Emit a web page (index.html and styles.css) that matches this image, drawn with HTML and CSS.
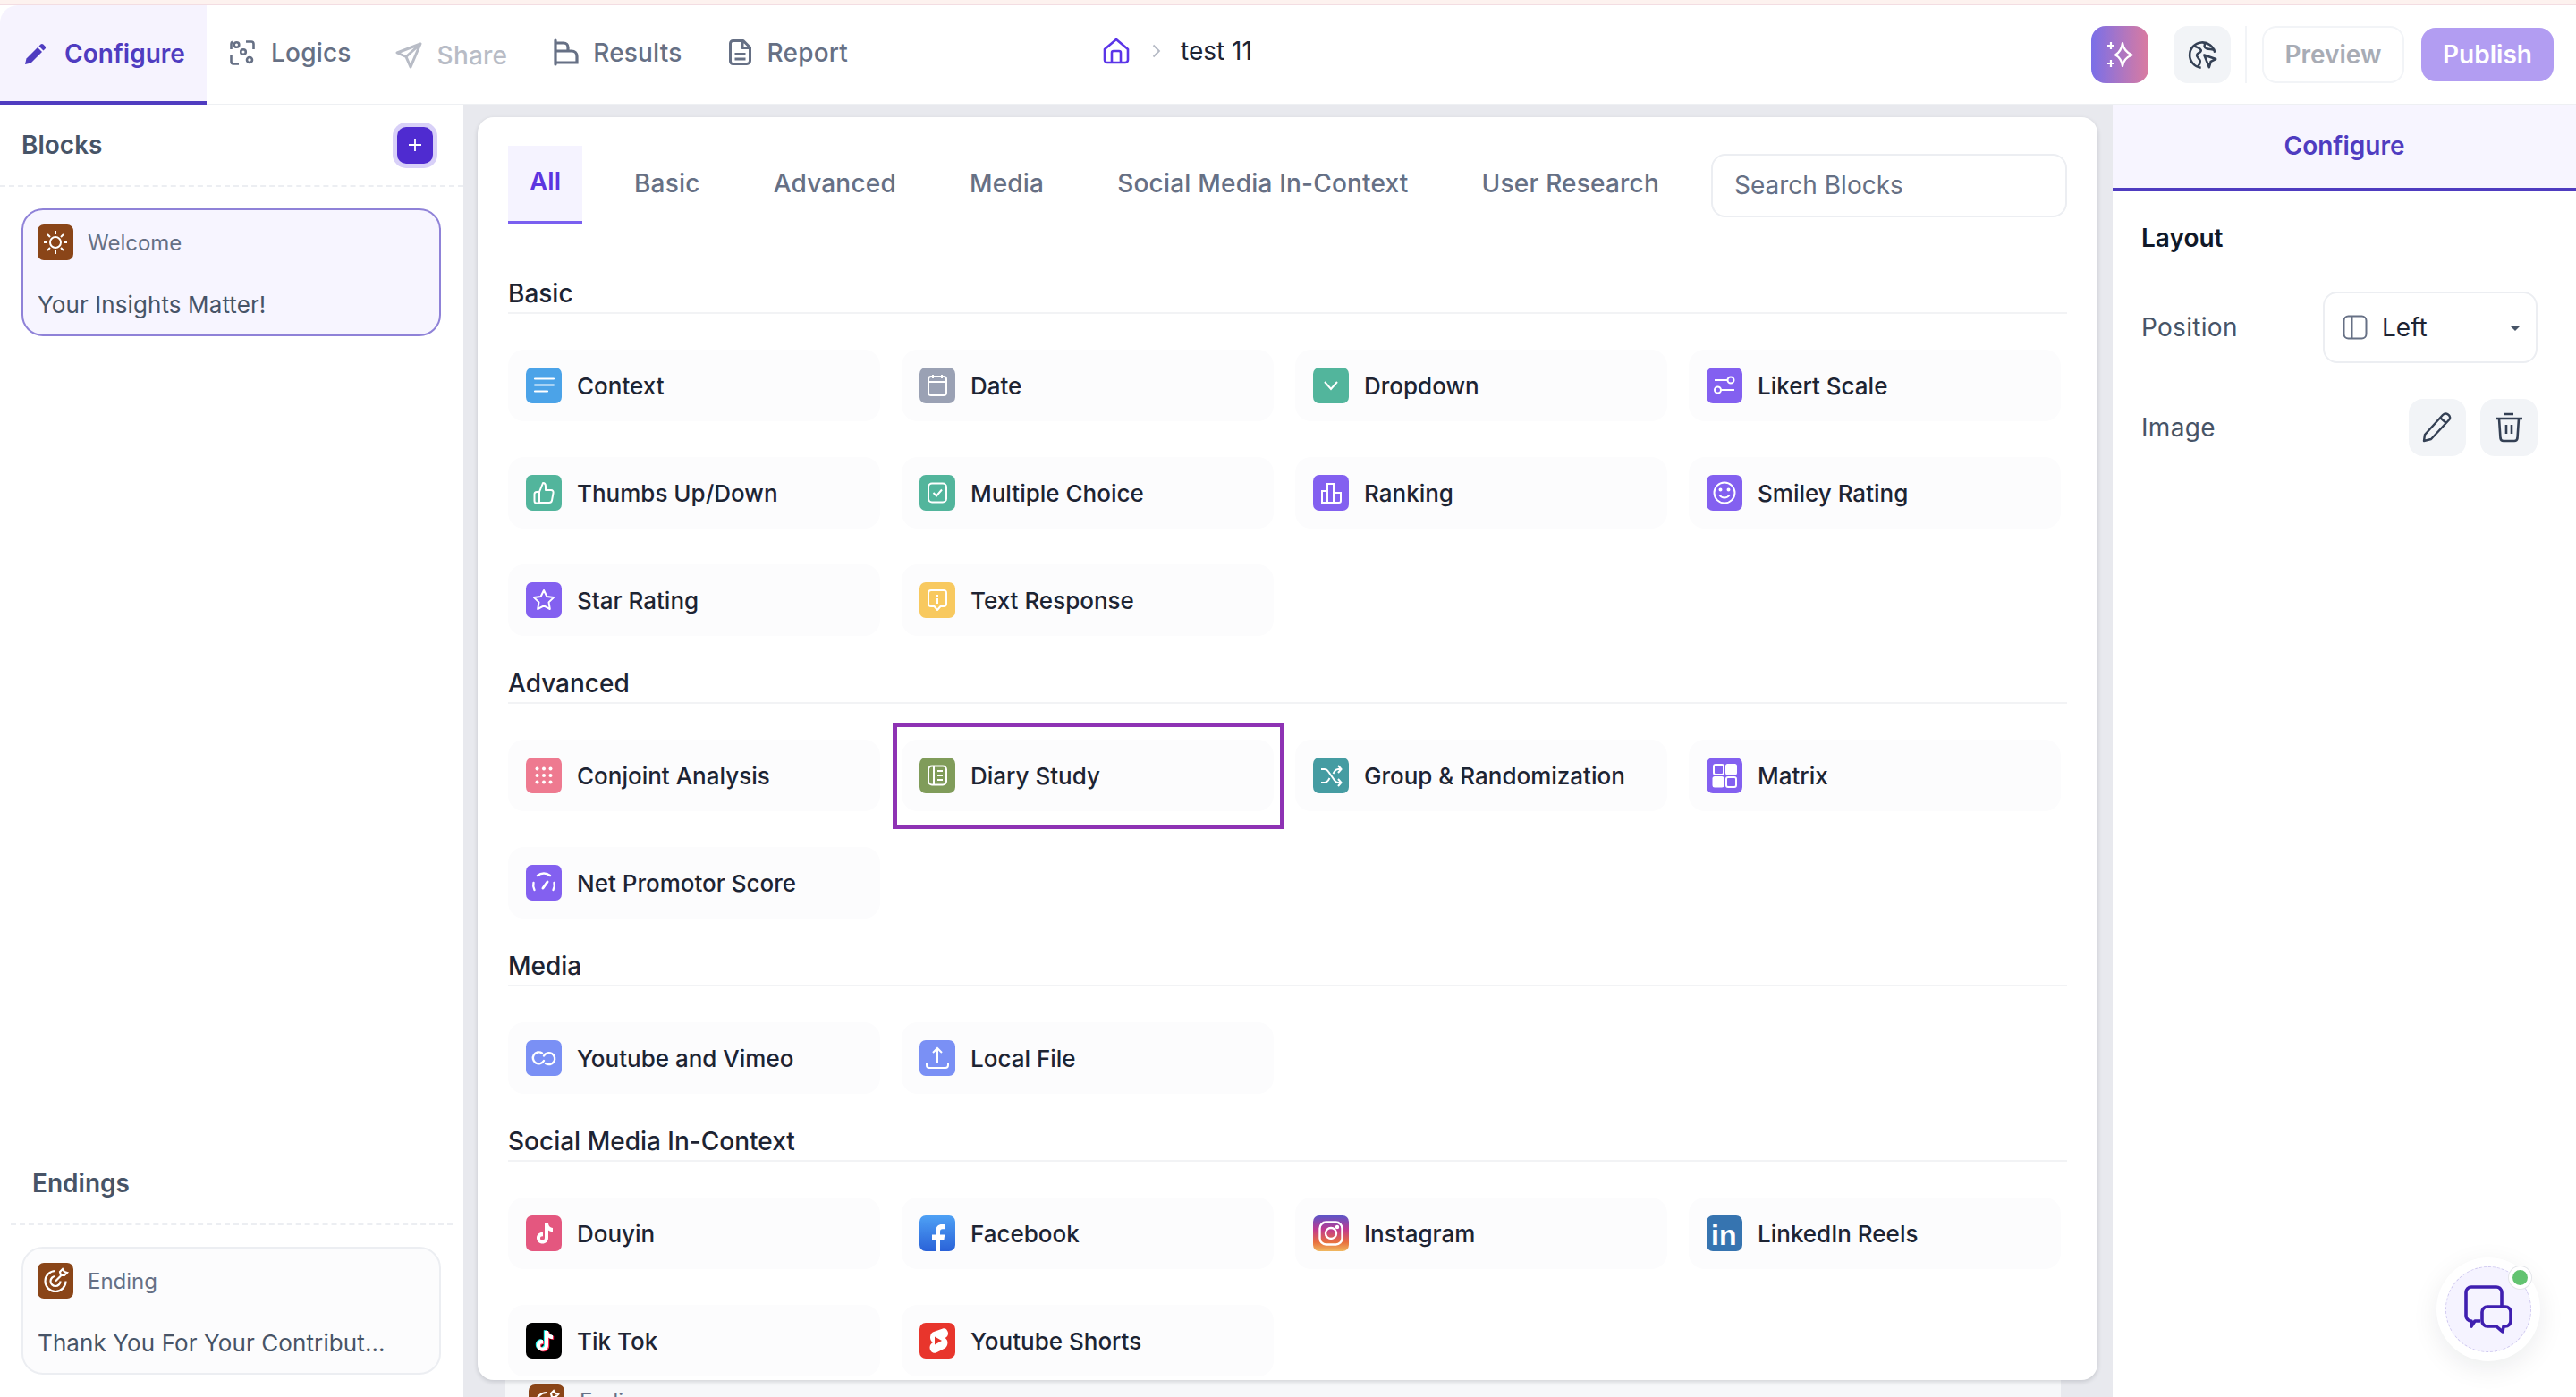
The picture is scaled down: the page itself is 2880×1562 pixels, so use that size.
FILE: index.html
```html
<!DOCTYPE html>
<html lang="en">
<head>
    <meta charset="UTF-8">
    <title>Configure - test 11</title>
    <link rel="stylesheet" href="styles.css">
</head>
<body>

<div class="top-line"></div>

<!-- Top bar -->
<header class="topbar">
    <nav class="nav">
        <a class="nav-item active">
            <svg width="24" height="24" viewBox="0 0 24 24" fill="#4f3cc0"><path d="M0 24l1.500-6.500L14 5l5 5L6.500 22.500z"/><path d="M15.500 3.500l2-2c.8-.8 2-.8 2.800 0l2.200 2.200c.8.800.8 2 0 2.800l-2 2z"/></svg>
            Configure
        </a>
        <a class="nav-item logics">
            <svg width="28" height="28" viewBox="0 0 28 28" fill="none" stroke="#667085" stroke-width="2.600"><path d="M18 1.500h6a2.500 2.500 0 0 1 2.500 2.500v6M1.500 17v7A2.500 2.500 0 0 0 4 26.500h6M1.500 10V4A2.500 2.500 0 0 1 3 1.700"/><circle cx="7.500" cy="5" r="2.800"/><circle cx="15" cy="13" r="2.800"/><circle cx="22" cy="22" r="3"/></svg>
            Logics
        </a>
        <a class="nav-item share">
            <svg width="30" height="30" viewBox="0 0 30 30" fill="none" stroke="#b8bcc6" stroke-width="3" stroke-linejoin="round"><path d="M28 2L2 12l10 4.500L17 28zM12 16.500L28 2"/></svg>
            Share
        </a>
        <a class="nav-item results">
            <svg width="28" height="31" viewBox="0 0 28 31" fill="none" stroke="#667085" stroke-width="3.200" stroke-linecap="round"><path d="M2 2v27M2 5h9c3 0 5 2 5 5v4M2 14h18c3.500 0 6 2.500 6 6v7H2"/></svg>
            Results
        </a>
        <a class="nav-item report">
            <svg width="25" height="29" viewBox="0 0 25 29" fill="none" stroke="#667085" stroke-width="3" stroke-linejoin="round"><path d="M4.500 1.500H16l7.500 7.500v15a3.500 3.500 0 0 1-3.500 3.500H4.500A3 3 0 0 1 1.500 24.500v-20a3 3 0 0 1 3-3zM15 2v7.500h8M6.500 16.500h12M6.500 22h12"/></svg>
            Report
        </a>
    </nav>

    <div class="crumbs">
        <svg width="30" height="30" viewBox="0 0 30 30" fill="none" stroke="#5b35e8" stroke-width="2.600" stroke-linejoin="round"><path d="M2 13L15 2l13 11v12a3 3 0 0 1-3 3H5a3 3 0 0 1-3-3z"/><path d="M10 28V17a2 2 0 0 1 2-2h6a2 2 0 0 1 2 2v11"/></svg>
        <svg class="crumb-sep" width="10" height="16" viewBox="0 0 10 16" fill="none" stroke="#b4b9c4" stroke-width="1.800"><path d="M1.500 1.500L8 8l-6.500 6.500"/></svg>
        <span class="crumb-name">test 11</span>
    </div>

    <div class="actions">
        <button class="icon-btn ai">
            <svg width="30" height="30" viewBox="0 0 30 30" fill="none" stroke="#fff" stroke-width="2.200" stroke-linejoin="round"><path d="M18 2c1 7 4 10.500 10.500 13.500C22 18 19 21.500 18 28c-1-6.500-3-10-8-12.500 5-3 7-6.500 8-13.500z"/><path d="M5 1v8M1 5h8M5 21v8M1 25h8"/></svg>
        </button>
        <button class="icon-btn globe">
            <svg width="33" height="33" viewBox="0 0 36 36" fill="none" stroke="#344054" stroke-width="2.800" stroke-linejoin="round"><path d="M33 15A15.500 15.500 0 1 0 16 33.500"/><path d="M8 7c3 2 7 2 8 5s-4 3-5 6 4 4 4 8-2 5-3 6M22 3c-3 3-2 6 1 7s7 1 10 2"/><path d="M20 18l14 5-6 3-2 7z"/></svg>
        </button>
        <div class="divider"></div>
        <button class="preview">Preview</button>
        <button class="publish">Publish</button>
    </div>
</header>

<div class="layout">
    <!-- Left sidebar -->
    <aside class="sidebar">
        <div class="blocks-head">
            <span class="blocks-title">Blocks</span>
            <button class="add-btn">
                <svg width="16" height="16" viewBox="0 0 16 16" stroke="#fff" stroke-width="1.800"><path d="M8 1v14M1 8h14"/></svg>
            </button>
        </div>
        <div class="side-card selected">
            <div class="side-card-head">
                <span class="ico brown">
                    <svg width="40" height="40" viewBox="0 0 40 40" fill="none" stroke="#fff" stroke-width="2"><circle cx="20" cy="20" r="6"/><path d="M20 7v4M20 29v4M7 20h4M29 20h4M11 11l3 3M26 26l3 3M11 29l3-3M26 14l3-3"/></svg>
                </span>
                <span class="side-label">Welcome</span>
            </div>
            <div class="side-text">Your Insights Matter!</div>
        </div>
        <div class="side-spacer"></div>
        <div class="endings-title">Endings</div>
        <div class="side-card">
            <div class="side-card-head">
                <span class="ico brown">
                    <svg width="40" height="40" viewBox="0 0 40 40" fill="none" stroke="#fff" stroke-width="2.200"><path d="M20 9a11.500 11.500 0 1 0 11.500 11.500"/><path d="M20 15a5.500 5.500 0 1 0 5.500 5.500"/><path d="M20 20.500l6-6M25 10l3-3 2 3 3 1-3 3h-4z"/></svg>
                </span>
                <span class="side-label">Ending</span>
            </div>
            <div class="side-text">Thank You For Your Contribut...</div>
        </div>
    </aside>

    <!-- Block picker -->
    <main class="middle">
        <div class="picker">
            <div class="picker-tabs">
                <a class="picker-tab active">All</a>
                <a class="picker-tab">Basic</a>
                <a class="picker-tab">Advanced</a>
                <a class="picker-tab">Media</a>
                <a class="picker-tab">Social Media In-Context</a>
                <a class="picker-tab">User Research</a>
                <input class="search" placeholder="Search Blocks">
            </div>

            <h2 class="section-title first">Basic</h2>
            <div class="block-grid">
                <div class="block"><span class="ico blue"><svg width="40" height="40" viewBox="0 0 40 40" fill="none" stroke="#fff" stroke-width="2.200" stroke-linecap="round"><path d="M10 12.500h21M10 19.500h21M10 26.500h14"/></svg></span>Context</div>
                <div class="block"><span class="ico gray"><svg width="40" height="40" viewBox="0 0 40 40" fill="none" stroke="#fff" stroke-width="2"><rect x="10" y="10" width="20" height="21" rx="3"/><path d="M10 16h20M15 8v4M25 8v4"/></svg></span>Date</div>
                <div class="block"><span class="ico green"><svg width="40" height="40" viewBox="0 0 40 40" fill="none" stroke="#fff" stroke-width="2"><path d="M13 16l7 8 7-8"/></svg></span>Dropdown</div>
                <div class="block"><span class="ico purple"><svg width="40" height="40" viewBox="0 0 40 40" fill="none" stroke="#fff" stroke-width="2"><path d="M9 14h15M16 25h15"/><circle cx="27" cy="14" r="3.500"/><circle cx="12.500" cy="25" r="3.500"/></svg></span>Likert Scale</div>

                <div class="block"><span class="ico green"><svg width="40" height="40" viewBox="0 0 40 40" fill="none" stroke="#fff" stroke-width="2" stroke-linejoin="round"><path d="M15 19l4-10c2 0 3 2 3 4v4h6c2 0 3 1.500 2.500 3.500l-1.500 8c-.3 1.500-1.500 2.500-3 2.500H15z"/><path d="M15 19h-3c-1.500 0-2.500 1-2.500 2.500V29c0 1.500 1 2.500 2.500 2.500h3"/></svg></span>Thumbs Up/Down</div>
                <div class="block"><span class="ico green"><svg width="40" height="40" viewBox="0 0 40 40" fill="none" stroke="#fff" stroke-width="2"><rect x="10" y="9.500" width="20" height="21" rx="4"/><path d="M15.500 20l3.500 3.500 6-7"/></svg></span>Multiple Choice</div>
                <div class="block"><span class="ico purple"><svg width="40" height="40" viewBox="0 0 40 40" fill="none" stroke="#fff" stroke-width="2"><path d="M10 31V18h6v13zM16 31V10h7v21zM23 31V20h8v9a2 2 0 0 1-2 2z"/></svg></span>Ranking</div>
                <div class="block"><span class="ico purple"><svg width="40" height="40" viewBox="0 0 40 40" fill="none" stroke="#fff" stroke-width="2"><circle cx="20" cy="20" r="11.500"/><path d="M14.500 22.500c2.500 4 8.500 4 11 0"/><circle cx="15.500" cy="16.500" r="1" fill="#fff"/><circle cx="24.500" cy="16.500" r="1" fill="#fff"/></svg></span>Smiley Rating</div>

                <div class="block"><span class="ico purple"><svg width="40" height="40" viewBox="0 0 40 40" fill="none" stroke="#fff" stroke-width="2" stroke-linejoin="round"><path d="M20 9l3.400 7 7.600 1.100-5.500 5.300 1.300 7.600-6.800-3.600-6.800 3.600 1.300-7.600L9 17.100l7.600-1.100z"/></svg></span>Star Rating</div>
                <div class="block"><span class="ico yellow"><svg width="40" height="40" viewBox="0 0 40 40" fill="none" stroke="#fff" stroke-width="2" stroke-linejoin="round"><path d="M13 9h14a3 3 0 0 1 3 3v12a3 3 0 0 1-3 3h-3.500L20 31l-3.500-4H13a3 3 0 0 1-3-3V12a3 3 0 0 1 3-3z"/><path d="M20 18v6M20 14v2"/></svg></span>Text Response</div>
            </div>

            <h2 class="section-title">Advanced</h2>
            <div class="block-grid">
                <div class="block"><span class="ico pink"><svg width="40" height="40" viewBox="0 0 40 40" fill="#fff"><circle cx="12.500" cy="12.500" r="2"/><circle cx="20" cy="12.500" r="2"/><circle cx="27.500" cy="12.500" r="2"/><circle cx="12.500" cy="20" r="2"/><circle cx="20" cy="20" r="2"/><circle cx="27.500" cy="20" r="2"/><circle cx="12.500" cy="27.500" r="2"/><circle cx="20" cy="27.500" r="2"/><circle cx="27.500" cy="27.500" r="2"/></svg></span>Conjoint Analysis</div>
                <div class="block diary">
                    <span class="ico olive"><svg width="40" height="40" viewBox="0 0 40 40" fill="none" stroke="#fff" stroke-width="2"><rect x="10" y="9.500" width="20" height="21" rx="4"/><path d="M16 9.500v21M20 15h6M20 20h6M20 25h6"/></svg></span>Diary Study
                    <div class="highlight"></div>
                </div>
                <div class="block"><span class="ico teal"><svg width="40" height="40" viewBox="0 0 40 40" fill="none" stroke="#fff" stroke-width="2"><path d="M9 13h4c2 0 3 1 4 2.500l7 10c1 1.500 2 2.500 4 2.500h3M9 28h4c2 0 3-1 4-2.500l1.500-2.500M22.500 18l1.500-2.500c1-1.500 2-2.500 4-2.500h3M28 9l3.500 4-3.500 4M28 24l3.500 4-3.500 4"/></svg></span>Group &amp; Randomization</div>
                <div class="block"><span class="ico purple"><svg width="40" height="40" viewBox="0 0 40 40"><rect x="8" y="8" width="11" height="11" rx="2" fill="none" stroke="#fff" stroke-width="2"/><rect x="21" y="7" width="13" height="12.500" rx="2.500" fill="#fff"/><rect x="6.500" y="21" width="13" height="12.500" rx="2.500" fill="#fff"/><rect x="22" y="22" width="11" height="11" rx="2" fill="none" stroke="#fff" stroke-width="2"/></svg></span>Matrix</div>

                <div class="block"><span class="ico purple"><svg width="40" height="40" viewBox="0 0 40 40" fill="none" stroke="#fff" stroke-width="2.400" stroke-linecap="round"><path d="M13 12a11 11 0 0 1 14 0M31.500 20a11 11 0 0 1-1 8M8.500 20a11 11 0 0 0 1 8"/><path d="M19 26l5-7" stroke-width="3"/></svg></span>Net Promotor Score</div>
            </div>

            <h2 class="section-title">Media</h2>
            <div class="block-grid">
                <div class="block"><span class="ico periwinkle"><svg width="40" height="40" viewBox="0 0 40 40" fill="none" stroke="#fff" stroke-width="2.400" stroke-linecap="round"><path d="M18 14.500A6.500 6.500 0 1 0 20 23M22 26A6.500 6.500 0 1 0 20 17.500"/></svg></span>Youtube and Vimeo</div>
                <div class="block"><span class="ico periwinkle"><svg width="40" height="40" viewBox="0 0 40 40" fill="none" stroke="#fff" stroke-width="2"><path d="M20 26V9M15 14l5-5 5 5M8 26v2a3 3 0 0 0 3 3h18a3 3 0 0 0 3-3v-2"/></svg></span>Local File</div>
            </div>

            <h2 class="section-title">Social Media In-Context</h2>
            <div class="block-grid">
                <div class="block"><span class="ico rose"><svg width="40" height="40" viewBox="0 0 40 40" fill="#fff"><path d="M21 9h4c.3 2.800 2 4.800 5 5v4c-2 0-3.700-.6-5-1.600V25c0 3.900-3 6.500-6.500 6.500S12 28.900 12 25.200s3.200-6.600 7-6v4.200c-1.500-.5-3 .5-3 2 0 1.300 1.100 2.300 2.300 2.300 1.500 0 2.700-1 2.700-2.700z"/></svg></span>Douyin</div>
                <div class="block"><span class="ico fb"><svg width="40" height="40" viewBox="0 0 40 40" fill="#fff"><path d="M23 40V27h4.500l.7-5.500H23V18c0-1.600.6-2.800 2.800-2.800H29v-5c-.7-.1-2.200-.2-4-.2-4 0-6.500 2.400-6.500 6.600v4.900H14V27h4.500v13z"/></svg></span>Facebook</div>
                <div class="block"><span class="ico ig"><svg width="40" height="40" viewBox="0 0 40 40" fill="none" stroke="#fff" stroke-width="2.400"><rect x="7.500" y="7.500" width="25" height="25" rx="7"/><circle cx="20" cy="20" r="6"/><circle cx="27" cy="13" r="1" fill="#fff"/></svg></span>Instagram</div>
                <div class="block"><span class="ico linkedin"><svg width="40" height="40" viewBox="0 0 40 40"><text x="5" y="33" fill="#fff" font-family="Liberation Sans" font-weight="700" font-size="32">in</text></svg></span>LinkedIn Reels</div>

                <div class="block"><span class="ico black"><svg width="40" height="40" viewBox="0 0 40 40"><path fill="#25f4ee" transform="translate(-1.200 -.8)" d="M21 9h4c.3 2.800 2 4.800 5 5v4c-2 0-3.700-.6-5-1.600V25c0 3.900-3 6.500-6.500 6.500S12 28.900 12 25.200s3.200-6.600 7-6v4.200c-1.500-.5-3 .5-3 2 0 1.300 1.100 2.300 2.300 2.300 1.500 0 2.700-1 2.700-2.700z"/><path fill="#fe2c55" transform="translate(1.200 .8)" d="M21 9h4c.3 2.800 2 4.800 5 5v4c-2 0-3.700-.6-5-1.600V25c0 3.900-3 6.500-6.500 6.500S12 28.900 12 25.200s3.200-6.600 7-6v4.200c-1.500-.5-3 .5-3 2 0 1.300 1.100 2.300 2.300 2.300 1.500 0 2.700-1 2.700-2.700z"/><path fill="#fff" d="M21 9h4c.3 2.800 2 4.800 5 5v4c-2 0-3.700-.6-5-1.600V25c0 3.900-3 6.500-6.500 6.500S12 28.900 12 25.200s3.200-6.600 7-6v4.200c-1.500-.5-3 .5-3 2 0 1.300 1.100 2.300 2.300 2.300 1.500 0 2.700-1 2.700-2.700z"/></svg></span>Tik Tok</div>
                <div class="block"><span class="ico shorts"><svg width="40" height="40" viewBox="0 0 40 40"><path fill="#fff" d="M26 6.500c3.500-1.500 6.500 3 6 6-.3 2-1.500 3.500-3.500 4.500 3 2 3.500 5 2.500 8-.6 2-2 3-3.500 4l-9 4.500c-3.500 1.500-7-2-7-6 0-2.500 1.500-4.500 3.500-5.500-3-2-3.500-5.500-2.500-8.500.6-1.700 2-2.800 3.500-3.500z"/><path fill="#e8352c" d="M17 15.500l8 4.500-8 4.500z"/></svg></span>Youtube Shorts</div>
            </div>
        </div>
        <div class="peek">
            <span class="ico brown">
                <svg width="40" height="40" viewBox="0 0 40 40" fill="none" stroke="#fff" stroke-width="2.200"><path d="M20 9a11.500 11.500 0 1 0 11.500 11.500"/><path d="M20 15a5.500 5.500 0 1 0 5.500 5.500"/><path d="M20 20.500l6-6M25 10l3-3 2 3 3 1-3 3h-4z"/></svg>
            </span>
            <span class="peek-label">Ending</span>
        </div>
    </main>

    <!-- Right panel -->
    <aside class="config">
        <div class="config-tab">Configure</div>
        <div class="config-body">
            <h3 class="config-title">Layout</h3>
            <div class="config-row">
                <span class="config-label">Position</span>
                <div class="select">
                    <svg width="28" height="28" viewBox="0 0 28 28" fill="none" stroke="#667085" stroke-width="2"><rect x="1.500" y="1.500" width="25" height="25" rx="5"/><path d="M10.500 1.500v25"/></svg>
                    <span class="select-value">Left</span>
                    <span class="caret"></span>
                </div>
            </div>
            <div class="config-row">
                <span class="config-label">Image</span>
                <div class="image-actions">
                    <button class="icon-btn">
                        <svg width="34" height="34" viewBox="0 0 34 34" fill="none" stroke="#344054" stroke-width="2.400" stroke-linejoin="round"><path d="M2 32l1-7L23 3c2-2 4-2 6-.5s3 4 1 6L10 30z"/><path d="M20 6l7 6"/></svg>
                    </button>
                    <button class="icon-btn">
                        <svg width="32" height="34" viewBox="0 0 32 34" fill="none" stroke="#344054" stroke-width="2.600"><path d="M1 7h30M11 2h10M5 7l1.500 22a3.500 3.500 0 0 0 3.500 3h12a3.500 3.500 0 0 0 3.500-3L27 7M13 14v10M19 14v10"/></svg>
                    </button>
                </div>
            </div>
        </div>
    </aside>
</div>

<!-- Chat bubble -->
<div class="chat">
    <div class="chat-inner">
        <svg width="54" height="54" viewBox="0 0 54 54" fill="none" stroke="#3f1fb0" stroke-width="3.600" stroke-linejoin="round"><path d="M18 40h-6l-4 6v-6a6 6 0 0 1-6-6V8a6 6 0 0 1 6-6h28a6 6 0 0 1 6 6v16"/><path d="M26 24h20a6 6 0 0 1 6 6v10a6 6 0 0 1-6 6h-2l-1 6-7-6H26a6 6 0 0 1-6-6V30a6 6 0 0 1 6-6z"/></svg>
    </div>
    <span class="chat-dot"></span>
</div>

</body>
</html>
```

FILE: styles.css
```css
* {
    box-sizing: border-box;
}
html, body {
    margin: 0;
    height: 100%;
}
body {
    width: 2880px;
    height: 1562px;
    overflow: hidden;
    position: relative;
    display: flex;
    flex-direction: column;
    font-family: Inter, "Noto Sans", sans-serif;
    font-size: 28px;
    color: #1d2433;
    background: #fff;
}
button {
    font-family: inherit;
    border: none;
    padding: 0;
}
.top-line {
    height: 6px;
    background: #fdf2ef;
    border-bottom: 2px solid #f3dde2;
    flex: none;
}

/* top bar */
.topbar {
    height: 111px;
    flex: none;
    display: flex;
    align-items: flex-start;
    border-bottom: 1px solid #eef0f3;
    position: relative;
}
.nav {
    display: flex;
    height: 111px;
}
.nav-item {
    display: flex;
    align-items: center;
    height: 111px;
    padding-bottom: 6px;
    font-weight: 500;
    letter-spacing: .2px;
    color: #667085;
}
.nav-item.active {
    width: 231px;
    margin-right: 26px;
    padding: 0 0 0 28px;
    gap: 20px;
    font-weight: 600;
    letter-spacing: 0;
    color: #4f3cc0;
    background: #f6f3fe;
    border-bottom: 4px solid #4f3cc0;
    border-top-left-radius: 20px;
}
.nav-item.logics {
    gap: 18px;
    margin-right: 49px;
}
.nav-item.share {
    color: #b8bcc6;
    padding-top: 6px;
    gap: 17px;
    margin-right: 52px;
}
.nav-item.results {
    gap: 16px;
    margin-right: 52px;
}
.nav-item.report {
    gap: 18px;
}
.crumbs {
    position: absolute;
    left: 1233px;
    top: 0;
    height: 102px;
    display: flex;
    align-items: center;
}
.crumb-sep {
    margin: 0 22px 0 25px;
}
.crumb-name {
    color: #1d2433;
}
.actions {
    margin-left: auto;
    margin-right: 25px;
    margin-top: 23px;
    display: flex;
    align-items: center;
    height: 64px;
}
.icon-btn {
    width: 64px;
    height: 64px;
    border-radius: 16px;
    background: #f2f4f7;
    display: flex;
    align-items: center;
    justify-content: center;
}
.icon-btn.ai {
    background: linear-gradient(90deg, #7a6fe8, #da7ba0);
    margin-right: 28px;
}
.divider {
    width: 2px;
    height: 64px;
    background: #f2f4f7;
    margin: 0 17px 0 16px;
}
.preview {
    width: 159px;
    height: 64px;
    background: #fff;
    border: 2px solid #f2f4f7;
    border-radius: 16px;
    font-size: 28px;
    font-weight: 600;
    color: #a8acb5;
    margin-right: 19px;
}
.publish {
    width: 148px;
    height: 60px;
    background: #b29df2;
    border-radius: 16px;
    font-size: 28px;
    font-weight: 600;
    color: #fff;
}

/* three columns */
.layout {
    flex: 1;
    display: flex;
    min-height: 0;
}
.sidebar {
    width: 518px;
    flex: none;
    display: flex;
    flex-direction: column;
    padding-bottom: 25px;
    background: #fff;
}
.blocks-head {
    height: 92px;
    flex: none;
    display: flex;
    align-items: center;
    justify-content: space-between;
    padding: 0 34px 0 24px;
    border-bottom: 2px dashed #eceef2;
}
.blocks-title {
    font-weight: 600;
    color: #475467;
}
.add-btn {
    width: 40px;
    height: 41px;
    border-radius: 10px;
    background: #4f2bd0;
    box-shadow: 0 0 0 5px #d8d0f8;
    display: flex;
    align-items: center;
    justify-content: center;
}
.side-card {
    margin: 0 25px 0 24px;
    height: 143px;
    flex: none;
    padding: 16px 16px 0;
    border: 2px solid #eceef2;
    border-radius: 24px;
    background: #fcfcfd;
}
.side-card.selected {
    margin-top: 24px;
    background: #f7f5ff;
    border-color: #8f82d8;
}
.side-card-head {
    display: flex;
    align-items: center;
    gap: 16px;
}
.side-label {
    font-size: 24px;
    color: #667085;
}
.side-text {
    margin-top: 34px;
    font-size: 26px;
    letter-spacing: .1px;
    color: #475467;
    white-space: nowrap;
}
.side-spacer {
    flex: 1;
}
.endings-title {
    font-weight: 600;
    color: #475467;
    margin: 0 12px 24px;
    padding: 0 24px 28px;
    border-bottom: 2px dashed #eceef2;
}
.ico {
    width: 40px;
    height: 40px;
    flex: none;
    border-radius: 7px;
    display: block;
    overflow: hidden;
}
.ico svg {
    display: block;
}
.brown { background: #8a4518; }
.blue { background: #4ba3e8; }
.gray { background: #9aa1b4; }
.green { background: #52b59c; }
.purple { background: #8360f0; }
.yellow { background: #f8c95f; }
.pink { background: #ee7a90; }
.olive { background: #809c5a; }
.teal { background: #459ca2; }
.periwinkle { background: #7a90f5; }
.rose { background: #e4577f; }
.fb { background: linear-gradient(180deg, #4ea1f5, #2a62d8); }
.ig { background: linear-gradient(180deg, #5b55c8 0%, #c13a8e 40%, #e8703f 75%, #f0b860 100%); }
.linkedin { background: #3674b0; }
.black { background: #000; }
.shorts { background: #e8352c; }

/* block picker */
.middle {
    width: 1844px;
    flex: none;
    background: #e8e9ee;
    padding-top: 14px;
    display: flex;
    flex-direction: column;
    overflow: hidden;
}
.picker {
    height: 1412px;
    flex: none;
    margin: 0 17px 0 16px;
    padding: 32px 34px 0;
    background: #fff;
    border-radius: 18px;
    box-shadow: 0 2px 5px rgba(16, 24, 40, .16);
    overflow: hidden;
    position: relative;
    z-index: 1;
}
.picker-tabs {
    display: flex;
    align-items: center;
    gap: 34px;
    height: 88px;
    width: 1743px;
}
.picker-tab {
    height: 88px;
    padding: 0 24px 4px;
    display: flex;
    align-items: center;
    font-weight: 500;
    letter-spacing: .2px;
    color: #667085;
}
.picker-tab.active {
    color: #5b35e0;
    font-weight: 600;
    letter-spacing: 0;
    background: #f5f3ff;
    border-bottom: 4px solid #7a5ff0;
}
.search {
    margin-left: auto;
    width: 398px;
    height: 71px;
    padding: 0 24px;
    font-family: inherit;
    font-size: 28px;
    border: 2px solid #eceef2;
    border-radius: 16px;
    outline: none;
}
.search::placeholder {
    color: #667085;
    opacity: 1;
}
.section-title {
    margin: 36px 0 40px;
    width: 1743px;
    height: 40px;
    line-height: 34px;
    font-size: 28px;
    font-weight: 500;
    color: #1d2433;
    border-bottom: 2px solid #f2f3f5;
}
.section-title.first {
    margin-top: 60px;
}
.block-grid {
    display: grid;
    grid-template-columns: repeat(4, 416px);
    gap: 40px 24px;
}
.block {
    height: 80px;
    padding: 0 20px;
    display: flex;
    align-items: center;
    gap: 17px;
    border-radius: 18px;
    background: #fcfcfd;
    font-size: 26px;
    font-weight: 500;
    position: relative;
}
.highlight {
    position: absolute;
    left: -10px;
    right: -12px;
    top: -19px;
    bottom: -20px;
    border: 5px solid #8e32b4;
}
.peek {
    flex: 1;
    margin: 0 58px 0 47px;
    padding: 5px 26px 0;
    display: flex;
    gap: 17px;
    background: #f6f7f9;
    overflow: hidden;
}
.peek-label {
    padding-top: 4px;
    font-size: 24px;
    color: #667085;
}

/* right panel */
.config {
    flex: 1;
    background: #fff;
}
.config-tab {
    height: 97px;
    padding-bottom: 2px;
    display: flex;
    align-items: center;
    justify-content: center;
    color: #4f3cc0;
    font-weight: 600;
    background: #f7f5ff;
    border-bottom: 4px solid #4f3cc0;
}
.config-body {
    padding: 32px 43px 0 32px;
}
.config-title {
    margin: 0;
    height: 40px;
    line-height: 40px;
    font-size: 28px;
    font-weight: 600;
    color: #101828;
}
.config-row {
    display: flex;
    align-items: center;
    justify-content: space-between;
    margin-top: 40px;
}
.config-label {
    color: #475467;
    letter-spacing: .3px;
}
.select {
    width: 240px;
    height: 80px;
    padding: 0 20px;
    display: flex;
    align-items: center;
    gap: 16px;
    border: 2px solid #eceef2;
    border-radius: 16px;
    position: relative;
}
.select-value {
    color: #1d2433;
}
.caret {
    position: absolute;
    right: 17px;
    top: 36px;
    border-left: 6px solid transparent;
    border-right: 6px solid transparent;
    border-top: 6px solid #475467;
}
.image-actions {
    display: flex;
    gap: 16px;
}

/* chat bubble */
.chat {
    position: absolute;
    left: 2724px;
    top: 1406px;
    width: 116px;
    height: 116px;
    border-radius: 50%;
    background: #fff;
    box-shadow: 0 8px 30px rgba(16, 24, 40, .08);
    display: flex;
    align-items: center;
    justify-content: center;
    z-index: 2;
}
.chat-inner {
    width: 96px;
    height: 96px;
    border-radius: 50%;
    background: #f5f3ff;
    border: 1px dashed #cfc8f0;
    display: flex;
    align-items: center;
    justify-content: center;
}
.chat-dot {
    position: absolute;
    left: 81px;
    top: 10px;
    width: 25px;
    height: 25px;
    border-radius: 50%;
    background: #62c370;
    border: 4px solid #fff;
    box-shadow: 0 0 0 1px #e4e6ea;
}
```
